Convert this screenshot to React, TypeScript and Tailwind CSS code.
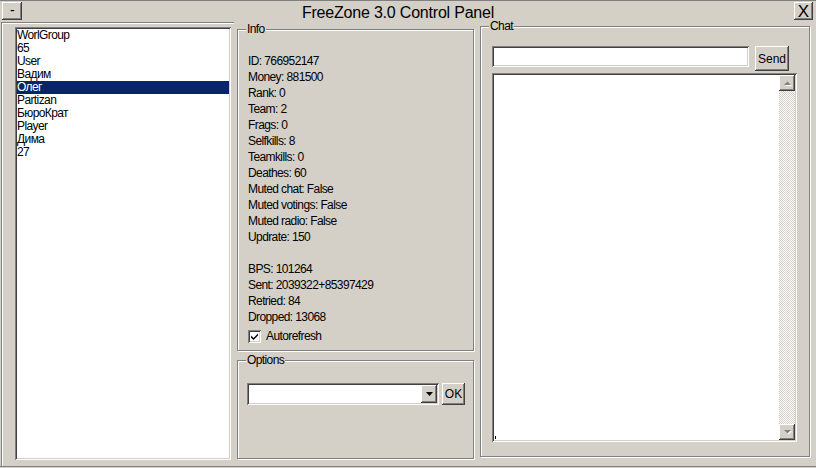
import React from "react";

const players = ["WorlGroup", "65", "User", "Вадим", "Олег", "Partizan", "БюроКрат", "Player", "Дима", "27"];

const stats = [
  "ID: 766952147",
  "Money: 881500",
  "Rank: 0",
  "Team: 2",
  "Frags: 0",
  "Selfkills: 8",
  "Teamkills: 0",
  "Deathes: 60",
  "Muted chat: False",
  "Muted votings: False",
  "Muted radio: False",
  "Updrate: 150",
  "",
  "BPS: 101264",
  "Sent: 2039322+85397429",
  "Retried: 84",
  "Dropped: 13068",
];

// win2k bevels
const raised =
  "bg-[#d4d0c8] shadow-[inset_-1px_-1px_#404040,inset_1px_1px_#ffffff,inset_-2px_-2px_#808080,inset_2px_2px_#d4d0c8]";
const sunken =
  "bg-white shadow-[inset_1px_1px_#808080,inset_-1px_-1px_#ffffff,inset_2px_2px_#404040,inset_-2px_-2px_#d4d0c8]";
const etched = "border border-[#808080] shadow-[inset_1px_1px_#ffffff,1px_1px_#ffffff]";

function ArrowUp() {
  return (
    <svg width="9" height="6" viewBox="0 0 9 6">
      <path d="M1 5h7L4.5 1.5z" fill="#ffffff" transform="translate(1 1)" />
      <path d="M1 5h7L4.5 1.5z" fill="#808080" />
    </svg>
  );
}

function ArrowDown() {
  return (
    <svg width="9" height="6" viewBox="0 0 9 6">
      <path d="M1 1h7L4.5 4.5z" fill="#ffffff" transform="translate(1 1)" />
      <path d="M1 1h7L4.5 4.5z" fill="#808080" />
    </svg>
  );
}

export default function App() {
  return (
    <div className="relative h-[468px] w-[816px] overflow-hidden border-t border-[#808080] bg-[#d4d0c8] font-['Liberation_Sans',Arial,sans-serif] text-[12px] tracking-[-0.6px] text-black">
      {/* title row */}
      <div className="flex h-[19px] items-start px-[2px] pt-[1px]">
        <button className={`${raised} flex h-[18px] w-[20px] items-center justify-center pb-[2px] text-[14px] leading-none`}>
          -
        </button>
        <div className="flex-1 pr-[20px] pt-[2px] text-center text-[16px] leading-[18px] tracking-[-0.2px]">
          FreeZone 3.0 Control Panel
        </div>
        <button className={`${raised} mr-[1px] flex h-[18px] w-[19px] items-center justify-center text-[17px] leading-none tracking-normal`}>
          X
        </button>
      </div>

      {/* body */}
      <div className="flex h-[446px]">
        {/* players list */}
        <div className="ml-px mt-[2px] flex h-[444px] w-[233px] flex-col border-l border-t border-[#808080] pb-[6px] pl-[13px] pr-[3px] pt-[4px] shadow-[inset_1px_1px_#ffffff]">
          <div className={`${sunken} flex-1 px-[2px] pb-[1px] pt-[2px]`}>
            {players.map((p, i) => (
              <div
                key={p}
                className={`h-[13px] leading-[13px] ${i === 4 ? "bg-[#0a246a] text-white" : ""}`}
              >
                {p}
              </div>
            ))}
          </div>
        </div>

        {/* info + options */}
        <div className="ml-[3px] flex w-[237px] flex-col">
          <fieldset className={`${etched} mt-[3px] h-[328px] pl-[10px] pt-[18px]`}>
            <legend className="-ml-[2px] bg-[#d4d0c8] px-[1px] leading-[12px]">Info</legend>
            {stats.map((s, i) => (
              <div key={i} className="h-[16px] leading-[16px]">
                {s}
              </div>
            ))}
            <label className="mt-[3px] flex h-[16px] items-center gap-[5px]">
              <span className={`${sunken} flex h-[13px] w-[13px] items-center justify-center`}>
                <svg width="7" height="7" viewBox="0 0 7 7">
                  <path d="M0 2.5l2.5 2.5L7 0.5v2L2.5 7 0 4.5z" fill="#000" />
                </svg>
              </span>
              <span>Autorefresh</span>
            </label>
          </fieldset>

          <fieldset className={`${etched} mt-[3px] h-[105px] pl-[9px] pt-[17px]`}>
            <legend className="-ml-[1px] bg-[#d4d0c8] px-[1px] leading-[12px]">Options</legend>
            <div className="flex items-center gap-[3px]">
              <div className={`${sunken} flex h-[22px] w-[192px] items-center justify-end pr-[2px]`}>
                <div className={`${raised} flex h-[18px] w-[16px] items-center justify-center`}>
                  <svg width="7" height="4" viewBox="0 0 7 4">
                    <path d="M0 0h7L3.5 4z" fill="#000" />
                  </svg>
                </div>
              </div>
              <button className={`${raised} h-[22px] w-[23px] text-[12px] tracking-normal`}>OK</button>
            </div>
          </fieldset>
        </div>

        {/* chat */}
        <fieldset className={`${etched} ml-[6px] h-[437px] w-[330px] pl-[11px] pr-[12px] pt-[14px]`}>
          <legend className="-ml-[3px] bg-[#d4d0c8] px-[1px] leading-[12px]">Chat</legend>
          <div className="flex items-start gap-[6px]">
            <div className={`${sunken} h-[21px] w-[257px]`} />
            <button className={`${raised} h-[25px] w-[34px] text-[12px] tracking-normal`}>Send</button>
          </div>
          <div className={`${sunken} mt-[2px] flex h-[369px] w-[305px] p-[2px]`}>
            <div className="relative flex-1">
              <div className="absolute bottom-[1px] left-[1px] h-[3px] w-px bg-black" />
            </div>
            <div className="flex w-[16px] flex-col">
              <div className={`${raised} flex h-[16px] items-center justify-center`}>
                <ArrowUp />
              </div>
              <div className="flex-1 bg-[repeating-conic-gradient(#ffffff_0_25%,#d4d0c8_0_50%)] bg-[length:2px_2px]" />
              <div className={`${raised} flex h-[16px] items-center justify-center`}>
                <ArrowDown />
              </div>
            </div>
          </div>
        </fieldset>
      </div>
      <div className="h-px bg-[#808080]" />
    </div>
  );
}
